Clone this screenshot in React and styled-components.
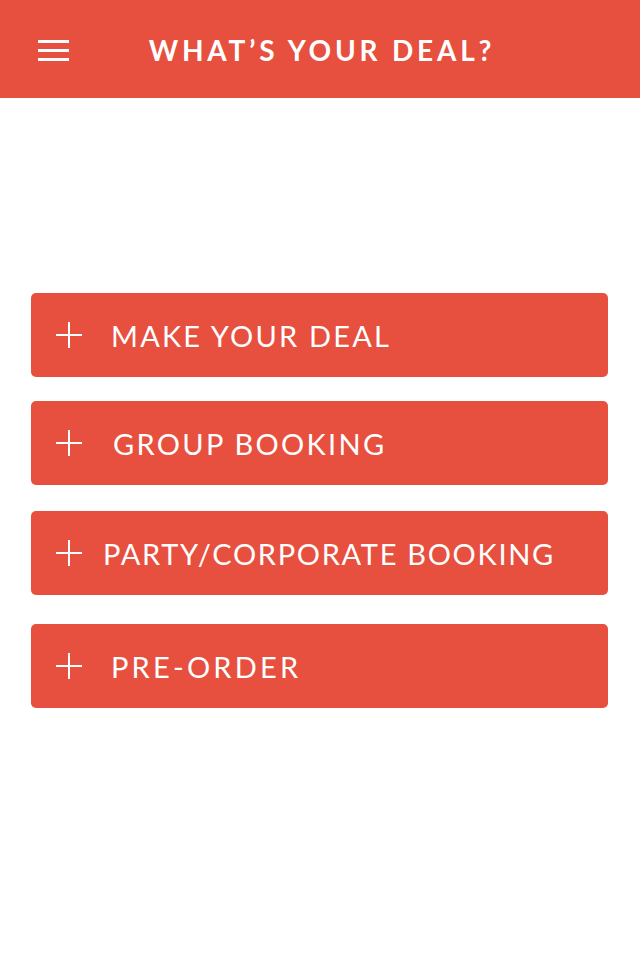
import React from 'react';
import styled, { createGlobalStyle } from 'styled-components';

const RED = '#e74f3f';

const GlobalStyle = createGlobalStyle`
    html, body {
        margin: 0;
        padding: 0;
        background: #fff;
    }
    body {
        font-family: Lato, 'Liberation Sans', sans-serif;
    }
`;

const Page = styled.div`
    width: 640px;
    min-height: 960px;
    background: #fff;
`;

const Header = styled.header`
    position: relative;
    height: 98px;
    background: ${RED};
    display: flex;
    align-items: center;
    justify-content: center;
`;

const MenuButton = styled.button`
    position: absolute;
    left: 38px;
    top: 40px;
    width: 31px;
    height: 21px;
    padding: 0;
    border: none;
    background: none;
    display: flex;
    flex-direction: column;
    justify-content: space-between;
    cursor: pointer;

    span {
        display: block;
        height: 3px;
        background: #fff;
    }
`;

const Title = styled.h1`
    margin: 0 0 0 4px;
    color: #fff;
    font-size: 28px;
    font-weight: 700;
    letter-spacing: 3.8px;
    line-height: 1;
    padding-top: 2px;
`;

const DealList = styled.main`
    display: flex;
    flex-direction: column;
    padding: 195px 32px 0 31px;
`;

const DealButton = styled.button`
    display: flex;
    align-items: center;
    height: 84px;
    margin-top: ${p => p.$gap}px;
    padding: 0 0 0 25px;
    border: none;
    border-radius: 5px;
    background: ${RED};
    color: #fff;
    cursor: pointer;
    text-align: left;
`;

const PlusIcon = styled.svg`
    flex: none;
    width: 26px;
    height: 26px;
`;

const Label = styled.span`
    margin-left: ${p => p.$offset}px;
    font-family: Lato, 'Liberation Sans', sans-serif;
    font-size: 29px;
    font-weight: 400;
    letter-spacing: ${p => p.$spacing}px;
    line-height: 1;
    padding-top: 1px;
`;

const deals = [
    { label: 'MAKE YOUR DEAL', gap: 0, offset: 29, spacing: 2.2 },
    { label: 'GROUP BOOKING', gap: 24, offset: 31, spacing: 2.3 },
    { label: 'PARTY/CORPORATE BOOKING', gap: 26, offset: 21, spacing: 1.7 },
    { label: 'PRE-ORDER', gap: 29, offset: 29, spacing: 3.2 },
];

const Plus = () => (
    <PlusIcon viewBox="0 0 26 26">
        <path d="M13 0v26M0 13h26" stroke="#fff" strokeWidth="2" fill="none" />
    </PlusIcon>
);

const App = () => {
    return (
        <Page>
            <GlobalStyle />
            <Header>
                <MenuButton aria-label="Menu">
                    <span />
                    <span />
                    <span />
                </MenuButton>
                <Title>WHAT’S YOUR DEAL?</Title>
            </Header>
            <DealList>
                {deals.map((deal, index) => (
                    <DealButton key={index} $gap={deal.gap}>
                        <Plus />
                        <Label $offset={deal.offset} $spacing={deal.spacing}>{deal.label}</Label>
                    </DealButton>
                ))}
            </DealList>
        </Page>
    );
};

export default App;
